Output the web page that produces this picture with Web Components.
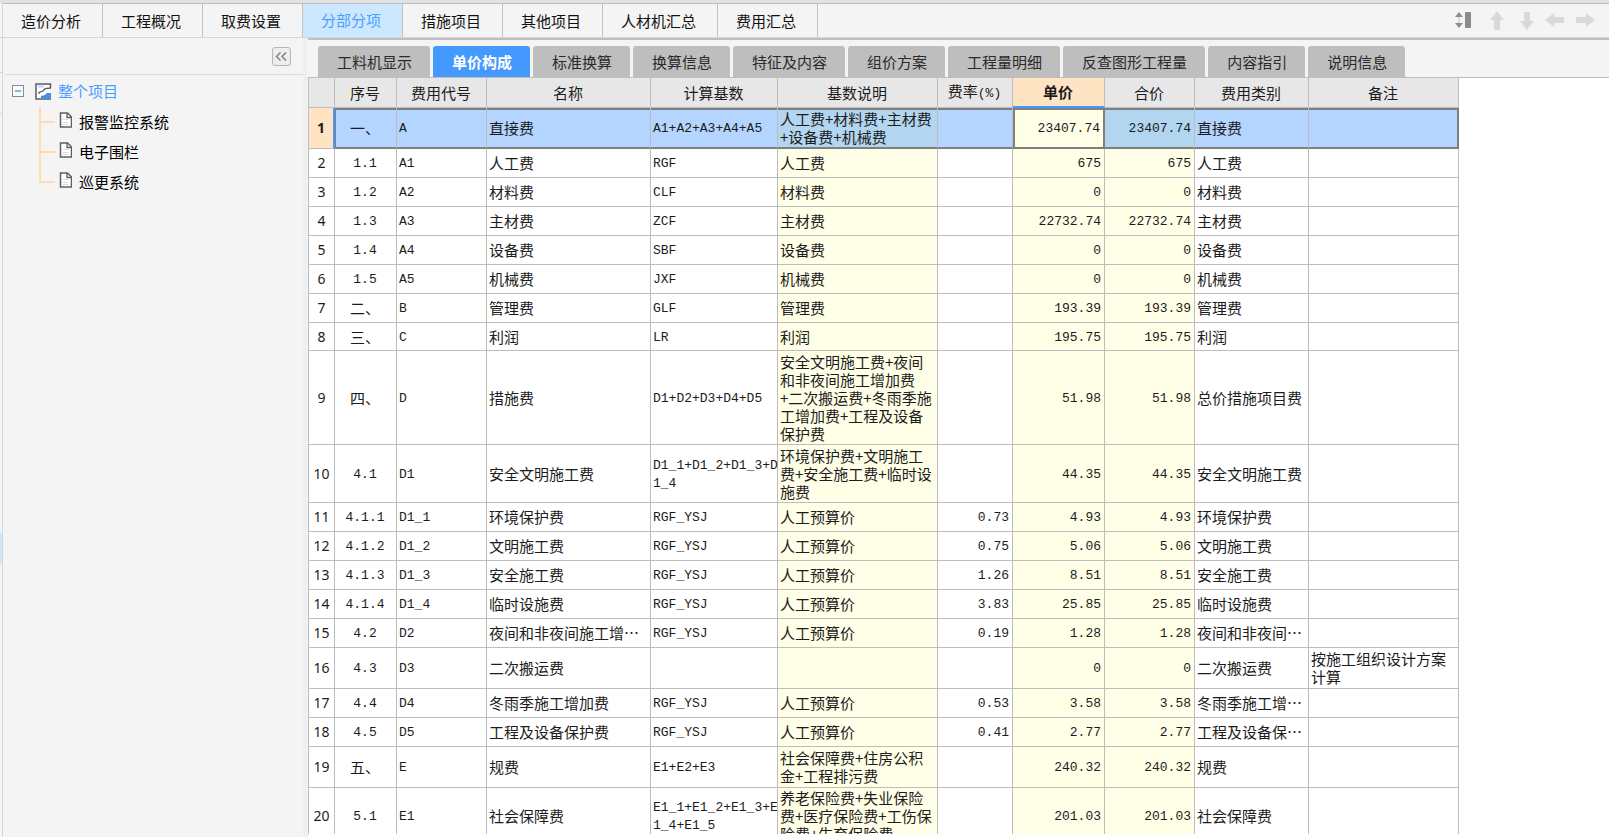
<!DOCTYPE html>
<html lang="zh-CN">
<head>
<meta charset="utf-8">
<title>分部分项 - 单价构成</title>
<style>
html, body { height: 100%; margin: 0; }
body { overflow: hidden; background: #f4f4f4; color: #1c1c1c; font: 15px/18px "Noto Sans CJK SC", "Noto Sans", sans-serif; }
</style>
</head>
<body>
<cost-app></cost-app>
<script>
const define = (name, html, setup) => customElements.define(name, class extends HTMLElement {
  connectedCallback() {
    if (this.shadowRoot) return;
    const t = document.createElement('template');
    t.innerHTML = typeof html === 'function' ? html(this) : html;
    this.attachShadow({ mode: 'open' }).append(t.content.cloneNode(true));
    if (setup) setup(this);
  }
});
const reset = 'button{appearance:none;border:0;margin:0;padding:0;background:none;font:inherit;color:inherit;white-space:nowrap;cursor:default}';

define('main-tab', el => `<style>${reset}
:host{display:block;border-right:1px solid #c2c2c2}
button{display:block;height:100%;padding:0 21px 0 18px;color:#111}
:host([active]){background:#cce8ff}
:host([active]) button{color:#4a9eff;padding-bottom:2px}
</style><button type="button" role="tab" aria-selected="${el.hasAttribute('active')}"><slot></slot></button>`);

define('sub-tab', el => `<style>${reset}
:host{display:block}
button{display:block;height:31px;padding:0 18px 0 19px;border-radius:3px 3px 0 0;background:#bebebe;color:#2a2a2a}
:host([active]) button{background:#4499ff;color:#fff;font-weight:bold}
</style><button type="button" role="tab" aria-selected="${el.hasAttribute('active')}"><slot></slot></button>`);

define('move-tools', `<style>${reset}
:host{display:flex;align-items:center;gap:10px;padding-right:14px;padding-bottom:2px}
button,svg{display:block}
</style>
<button type="button" aria-label="行高"><svg width="20" height="20"><path d="M4 2l4 5H0zM4 18l4-5H0z" fill="#8c8c8c"/><path d="M3 7h2v6H3z" fill="#dcdcdc"/><rect x="10" y="2" width="6" height="16" rx="1" fill="#8c8c8c"/></svg></button>
<button type="button" aria-label="上移"><svg width="20" height="20"><path d="M12 1l7 9h-4v10H9V10H5z" fill="#d9d9d9"/></svg></button>
<button type="button" aria-label="下移"><svg width="20" height="20"><path d="M12 20l7-9h-4V2H9v9H5z" fill="#d9d9d9"/></svg></button>
<button type="button" aria-label="左移"><svg width="20" height="20"><path d="M0 10l9-7v4h10v6H9v4z" fill="#d9d9d9"/></svg></button>
<button type="button" aria-label="右移"><svg width="20" height="20"><path d="M20 10l-9-7v4H1v6h10v4z" fill="#d9d9d9"/></svg></button>`);

define('tree-item', `<style>${reset}
:host{display:grid;grid-template-columns:20px 1fr;height:30px}
.line{border-left:2px solid #ffdcb0;width:14px}
.line::after{content:"";display:block;height:14px;border-bottom:2px solid #ffdcb0}
:host([last]) .line{height:16px}
button{display:flex;align-items:center;gap:7px;color:#000;height:30px}
svg{margin-top:-4px}
</style><span class="line"></span>
<button type="button"><svg width="13" height="16"><path d="M1.500 1h7l4 4v10h-11z" fill="#fff" stroke="#5f5f5f" stroke-width="1.500"/><path d="M8 1v4.500h4.500" fill="none" stroke="#5f5f5f" stroke-width="1.300"/><path d="M3.500 7.500h6M3.500 10.500h6M3.500 12.500h6" stroke="#ddd"/></svg><slot></slot></button>`);

define('project-tree', `<style>${reset}
:host{display:block;box-sizing:border-box;width:304px;background:#f4f4f4;border-right:4px solid #efefef}
header{display:flex;justify-content:flex-end;align-items:center;height:36px;margin:0 0 0 2px;padding-right:12px;border-bottom:1px solid #dcdcdc}
.fold{width:19px;height:19px;box-sizing:border-box;border:1px solid #b5b5b5;border-radius:3px;background:#ededed}
.fold svg,.root svg{display:block}
.root{display:flex;align-items:center;height:32px;padding-left:9px}
.root button:last-child{display:flex;align-items:center;gap:6px;margin-left:11px;color:#4a9eff}
.kids{padding-left:36px}
</style>
<header><button class="fold" type="button" aria-label="收起"><svg width="17" height="17"><path d="M7.500 4.500l-4 4 4 4M13 4.500l-4 4 4 4" fill="none" stroke="#777" stroke-width="1.300"/></svg></button></header>
<div class="root"><button type="button" aria-label="折叠"><svg width="12" height="12"><rect x=".5" y=".5" width="11" height="11" fill="#fafafa" stroke="#8a8a8a"/><path d="M3 6h6" stroke="#4bacd2" stroke-width="1.500"/></svg></button>
<button type="button"><svg width="17" height="17"><path d="M15.500 5V1H1v15h15" fill="#fff" stroke="#5c5c5c" stroke-width="1.500"/><path d="M3 3.500h6" stroke="#b5dafb" stroke-width="2"/><path d="M4 11V9.500L8 8l2-2.500 6-.5" fill="none" stroke="#5c5c5c" stroke-width="1.300"/><path d="M6 15.500v-2.500l4-1 1.500-2H16v5.500z" fill="#3b92ee"/></svg><span>整个项目</span></button></div>
<div class="kids"><tree-item>报警监控系统</tree-item><tree-item>电子围栏</tree-item><tree-item last>巡更系统</tree-item></div>`);

const columns = [['', 27], ['序号', 62], ['费用代号', 90], ['名称', 164], ['计算基数', 127], ['基数说明', 160], ['费率<span class="m">(%)</span>', 75], ['单价', 92], ['合价', 90], ['费用类别', 114], ['备注', 150]];
const ysj = 'RGF_YSJ', rg = '人工预算价';
const rows = [
  ['一、', 'A', '直接费', 'A1+A2+A3+A4+A5', '人工费+材料费+主材费<br>+设备费+机械费', '', '23407.74', '直接费', '', 41],
  ['1.1', 'A1', '人工费', 'RGF', '人工费', '', '675', '人工费'],
  ['1.2', 'A2', '材料费', 'CLF', '材料费', '', '0', '材料费'],
  ['1.3', 'A3', '主材费', 'ZCF', '主材费', '', '22732.74', '主材费'],
  ['1.4', 'A4', '设备费', 'SBF', '设备费', '', '0', '设备费'],
  ['1.5', 'A5', '机械费', 'JXF', '机械费', '', '0', '机械费'],
  ['二、', 'B', '管理费', 'GLF', '管理费', '', '193.39', '管理费'],
  ['三、', 'C', '利润', 'LR', '利润', '', '195.75', '利润', '', 28],
  ['四、', 'D', '措施费', 'D1+D2+D3+D4+D5', '安全文明施工费+夜间<br>和非夜间施工增加费<br>+二次搬运费+冬雨季施<br>工增加费+工程及设备<br>保护费', '', '51.98', '总价措施项目费', '', 94],
  ['4.1', 'D1', '安全文明施工费', 'D1_1+D1_2+D1_3+D<br>1_4', '环境保护费+文明施工<br>费+安全施工费+临时设<br>施费', '', '44.35', '安全文明施工费', '', 58],
  ['4.1.1', 'D1_1', '环境保护费', ysj, rg, '0.73', '4.93', '环境保护费'],
  ['4.1.2', 'D1_2', '文明施工费', ysj, rg, '0.75', '5.06', '文明施工费'],
  ['4.1.3', 'D1_3', '安全施工费', ysj, rg, '1.26', '8.51', '安全施工费'],
  ['4.1.4', 'D1_4', '临时设施费', ysj, rg, '3.83', '25.85', '临时设施费'],
  ['4.2', 'D2', '夜间和非夜间施工增…', ysj, rg, '0.19', '1.28', '夜间和非夜间…'],
  ['4.3', 'D3', '二次搬运费', '', '', '', '0', '二次搬运费', '按施工组织设计方案<br>计算', 41],
  ['4.4', 'D4', '冬雨季施工增加费', ysj, rg, '0.53', '3.58', '冬雨季施工增…'],
  ['4.5', 'D5', '工程及设备保护费', ysj, rg, '0.41', '2.77', '工程及设备保…'],
  ['五、', 'E', '规费', 'E1+E2+E3', '社会保障费+住房公积<br>金+工程排污费', '', '240.32', '规费', '', 41],
  ['5.1', 'E1', '社会保障费', 'E1_1+E1_2+E1_3+E<br>1_4+E1_5', '养老保险费+失业保险<br>费+医疗保险费+工伤保<br>险费+生育保险费', '', '201.03', '社会保障费', '', 57]
];
const rowHtml = (r, i) => {
  const [no, code, name, base, note, rate, price, type, memo = '', h = 29] = r;
  return `<tr class="${i ? '' : 'sel'}" style="height:${h}px"><th scope="row">${i + 1}</th>
<td class="c ${no.includes('、') ? '' : 'm'}">${no}</td><td class="m">${code}</td><td>${name}</td><td class="m">${base}</td><td class="y">${note}</td><td class="m r">${rate}</td><td class="m r y ${i ? '' : 'cur'}">${price}</td><td class="m r y">${price}</td><td>${type}</td><td>${memo}</td></tr>`;
};
define('cost-table', `<style>
:host{display:block;overflow:hidden;background:#fff}
table{table-layout:fixed;width:1151px;border-collapse:separate;border-spacing:0}
th,td{box-sizing:border-box;padding:0 3px 0 2px;border-right:1px solid #bdbdbd;border-bottom:1px solid #bdbdbd;white-space:nowrap;text-align:left;vertical-align:middle;font-weight:normal}
th:first-child{border-left:1px solid #bdbdbd}
thead th{height:30px;background:#e7e7e7;text-align:center}
thead .cur{background:#ffe4c4;font-weight:bold;border-bottom:2px solid #4499ff}
tbody th{font:14px/18px "Noto Sans",sans-serif;text-align:center;padding:0}
.m{font-family:"Liberation Mono",monospace;font-size:13px}
td.m{padding-top:2px}
.c{text-align:center}td.r{text-align:right}.y{background:#ffffe8}
.sel td{background:#b3d5ff;border-bottom:2px solid #7f7f7f;box-shadow:inset 0 2px #7f7f7f}
.sel td.y{background:#b2d5f0}
.sel td.cur{background:#ffffe8;border-right:2px solid #7f7f7f;box-shadow:inset 2px 2px #7f7f7f}
.sel td:nth-child(2){box-shadow:inset 1px 2px #7f7f7f}
.sel td:last-child{border-right:2px solid #7f7f7f}
.sel th{background:#ffe4c4;border-right:2px solid #4499ff;font-weight:bold}
</style><table><colgroup>${columns.map(c => `<col style="width:${c[1]}px">`).join('')}</colgroup>
<thead><tr>${columns.map(c => `<th scope="col" class="${c[0] === '单价' ? 'cur' : ''}">${c[0]}</th>`).join('')}</tr></thead>
<tbody>${rows.map(rowHtml).join('')}</tbody></table>`);

const tabs = (tag, list, on) => list.map(t => `<${tag}${t === on ? ' active' : ''}>${t}</${tag}>`).join('');
define('cost-app', `<style>
:host{display:grid;grid-template-columns:3px 1fr;height:100%;background:#f4f4f4;border-top:3px solid #e1e1e1;box-sizing:border-box}
.rail{box-sizing:border-box;border-right:1px solid #d6d6d6;display:flex;flex-direction:column}
.rail i{display:block;height:34px;border-bottom:1px solid #d6d6d6}
.rail i.tall{height:40px}
.rail i.on{margin-top:419px;height:31px;background:#cce8ff;border:0}
.app{display:grid;grid-template-rows:35px 1fr;min-width:0;min-height:0}
.bar{display:flex;justify-content:space-between;border-top:1px solid #bdbdbd;border-bottom:1px solid #d6d6d6}
.tabs{display:flex}
.body{display:grid;grid-template-columns:304px 1fr;min-height:0}
main{display:grid;grid-template-rows:38px 1fr;margin-left:1px;min-width:0;min-height:0;border-top:2px solid #bebebe;padding-bottom:3px;background:#fff}
.subs{display:flex;gap:3px;align-items:flex-end;padding-left:10px;background:#f4f4f4;border-bottom:1px solid #bebebe}
</style>
<div class="rail"><i></i><i></i><i class="tall"></i><i class="on"></i></div>
<div class="app">
<div class="bar"><div class="tabs" role="tablist">${tabs('main-tab', ['造价分析', '工程概况', '取费设置', '分部分项', '措施项目', '其他项目', '人材机汇总', '费用汇总'], '分部分项')}</div><move-tools></move-tools></div>
<div class="body"><project-tree></project-tree>
<main><div class="subs" role="tablist">${tabs('sub-tab', ['工料机显示', '单价构成', '标准换算', '换算信息', '特征及内容', '组价方案', '工程量明细', '反查图形工程量', '内容指引', '说明信息'], '单价构成')}</div>
<cost-table></cost-table></main></div></div>`);
</script>
</body>
</html>
